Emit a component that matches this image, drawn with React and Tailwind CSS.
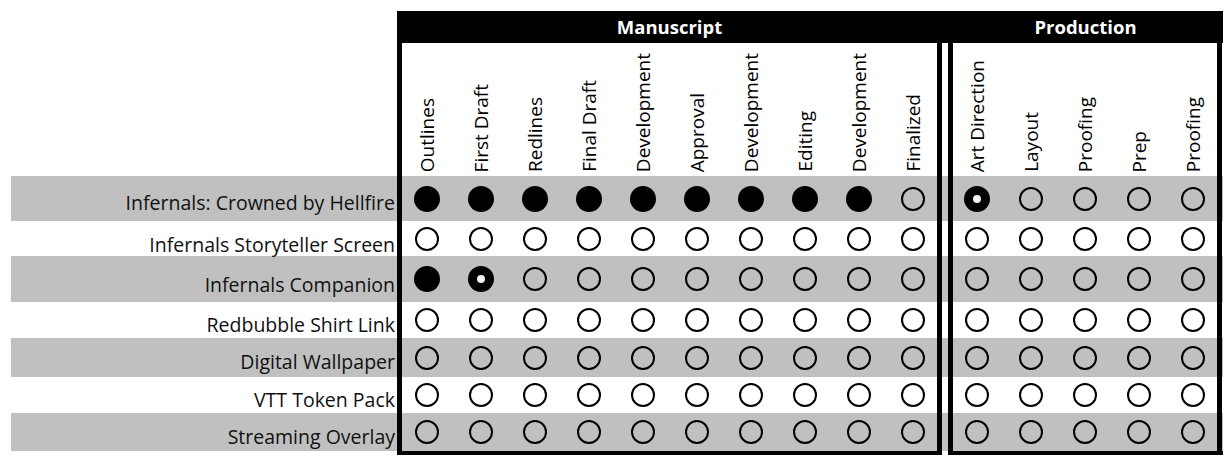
import React from "react";

const MS = ["Outlines","First Draft","Redlines","Final Draft","Development","Approval","Development","Editing","Development","Finalized"];
const PR = ["Art Direction","Layout","Proofing","Prep","Proofing"];

const F = "f", O = "o", T = "t";
const rows = [
  { label: "Infernals: Crowned by Hellfire", h: "h-[45px]", pb: "pb-[9px]", gray: true, ms: [F,F,F,F,F,F,F,F,F,O], pr: [T,O,O,O,O] },
  { label: "Infernals Storyteller Screen", h: "h-[35px]", pb: "pb-[2px]", gray: false, ms: Array(10).fill(O), pr: Array(5).fill(O) },
  { label: "Infernals Companion", h: "h-[46px]", pb: "pb-[8px]", gray: true, ms: [F,T,O,O,O,O,O,O,O,O], pr: Array(5).fill(O) },
  { label: "Redbubble Shirt Link", h: "h-[36px]", pb: "pb-[4px]", gray: false, ms: Array(10).fill(O), pr: Array(5).fill(O) },
  { label: "Digital Wallpaper", h: "h-[39px]", pb: "pb-[6px]", gray: true, ms: Array(10).fill(O), pr: Array(5).fill(O) },
  { label: "VTT Token Pack", h: "h-[36px]", pb: "pb-[4px]", gray: false, ms: Array(10).fill(O), pr: Array(5).fill(O) },
  { label: "Streaming Overlay", h: "h-[38px]", pb: "pb-[5px]", gray: true, ms: Array(10).fill(O), pr: Array(5).fill(O) },
];

function Dot({ kind }) {
  return (
    <svg width="26" height="26" viewBox="0 0 26 26">
      {kind === F && <circle cx="13" cy="13" r="13" fill="#000" />}
      {kind === O && <circle cx="13" cy="13" r="11" fill="none" stroke="#000" strokeWidth="2" />}
      {kind === T && <circle cx="13" cy="13" r="8.5" fill="#f2f2f2" stroke="#000" strokeWidth="9" />}
    </svg>
  );
}

function Cells({ items, shift, render }) {
  return (
    <div className={`flex h-full ${shift}`}>
      {items.map((it, i) => (
        <div key={i} className="w-[54px] shrink-0 h-full flex justify-center">
          {render(it)}
        </div>
      ))}
    </div>
  );
}

const Bar = () => <div className="w-[5px] shrink-0 bg-black h-full" />;

export default function App() {
  const vert = (t) => (
    <div className="h-full flex items-end justify-center pb-[4px]">
      <span className="[writing-mode:vertical-rl] rotate-180 whitespace-nowrap text-[19px] leading-none text-black">{t}</span>
    </div>
  );
  return (
    <div className="w-[1232px] h-[465px] bg-white pt-[11px] pl-[11px] overflow-hidden" style={{ fontFamily: "'Open Sans', Lato, sans-serif" }}>
      {/* title row */}
      <div className="flex h-[32px]">
        <div className="w-[386px] shrink-0" />
        <div className="flex bg-black text-white font-bold text-[18.5px]">
          <div className="w-[545px] flex items-center justify-center">Manuscript</div>
          <div className="w-[6px]" />
          <div className="w-[275px] flex items-center justify-center">Production</div>
        </div>
      </div>
      {/* column headers */}
      <div className="flex h-[133px]">
        <div className="w-[386px] shrink-0" />
        <Bar />
        <div className="w-[535px] shrink-0 h-full">
          <Cells items={MS} shift="-ml-[2px]" render={vert} />
        </div>
        <Bar />
        <div className="w-[6px] shrink-0" />
        <Bar />
        <div className="w-[264px] shrink-0 h-full">
          <Cells items={PR} shift="-ml-[3px]" render={vert} />
        </div>
        <Bar />
      </div>
      {/* data rows */}
      {rows.map((r, ri) => (
        <div key={ri} className={`flex w-[1212px] ${r.h} ${r.gray ? "bg-[#c0c0c0]" : "bg-white"}`}>
          <div className={`w-[386px] shrink-0 flex items-end justify-end pr-[2px] ${r.pb} text-[19.5px] leading-none text-[#111] whitespace-nowrap`}>
            {r.label}
          </div>
          <Bar />
          <div className="w-[535px] shrink-0 h-full">
            <Cells items={r.ms} shift="-ml-[2px]" render={(k) => <div className="h-full flex items-center"><Dot kind={k} /></div>} />
          </div>
          <Bar />
          <div className="w-[6px] shrink-0" />
          <Bar />
          <div className="w-[264px] shrink-0 h-full">
            <Cells items={r.pr} shift="-ml-[3px]" render={(k) => <div className="h-full flex items-center"><Dot kind={k} /></div>} />
          </div>
          <Bar />
        </div>
      ))}
      {/* bottom border */}
      <div className="flex h-[4px]">
        <div className="w-[386px] shrink-0" />
        <div className="w-[545px] shrink-0 bg-black" />
        <div className="w-[6px] shrink-0" />
        <div className="w-[275px] shrink-0 bg-black" />
      </div>
    </div>
  );
}
